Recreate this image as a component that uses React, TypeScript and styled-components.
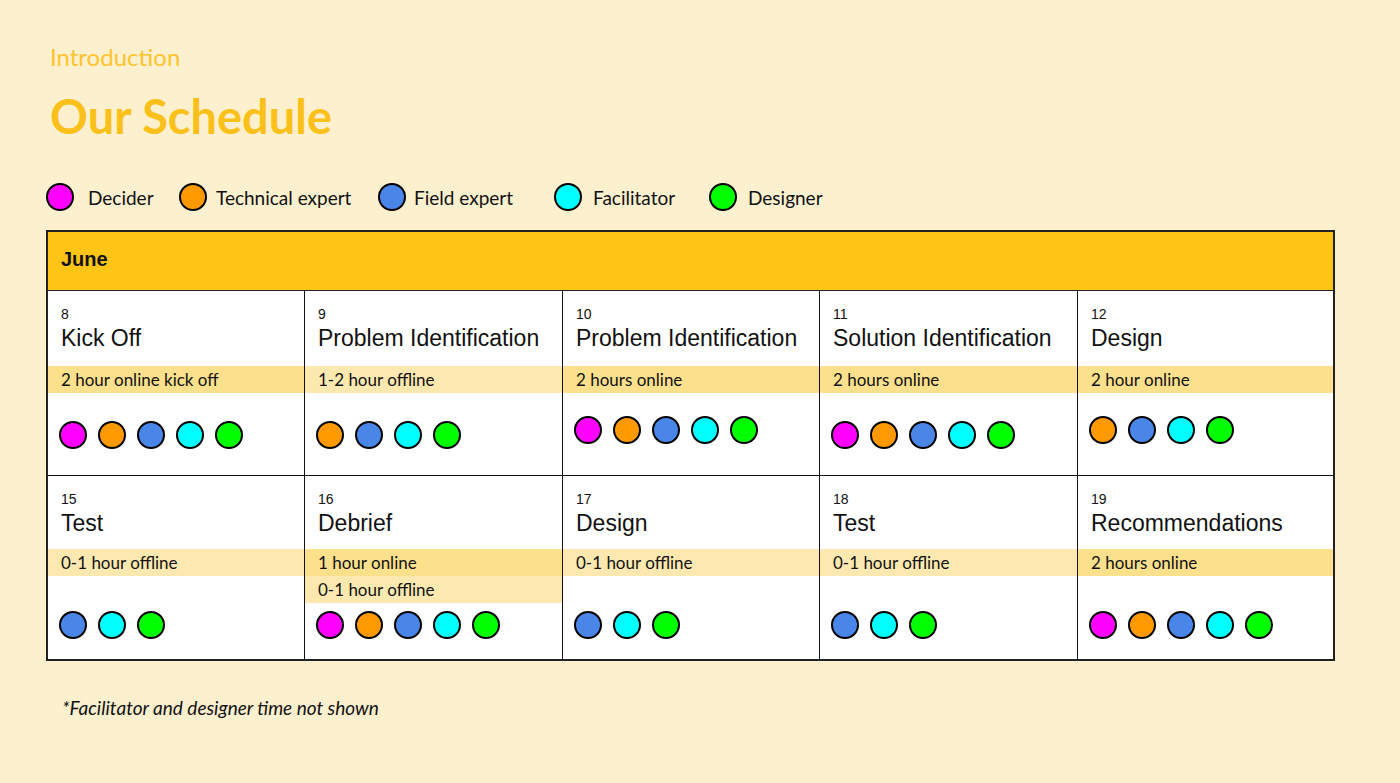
import styled, { createGlobalStyle } from "styled-components";

type Role = "decider" | "technical" | "field" | "facilitator" | "designer";

type Band = {
  text: string;
  online: boolean;
};

type Day = {
  date: number;
  title: string;
  bands: Band[];
  roles: Role[];
  lift?: number;
};

const roleColors: Record<Role, string> = {
  decider: "#ff00ff",
  technical: "#ff9900",
  field: "#4a86e8",
  facilitator: "#00ffff",
  designer: "#00ff00",
};

// widths and label gaps read off the legend strip
const legend: { role: Role; label: string; width: number; gap: number }[] = [
  { role: "decider", label: "Decider", width: 133, gap: 14 },
  { role: "technical", label: "Technical expert", width: 199, gap: 9 },
  { role: "field", label: "Field expert", width: 176, gap: 8 },
  { role: "facilitator", label: "Facilitator", width: 155, gap: 11 },
  { role: "designer", label: "Designer", width: 130, gap: 11 },
];

const all: Role[] = ["decider", "technical", "field", "facilitator", "designer"];

const weekOne: Day[] = [
  { date: 8, title: "Kick Off", bands: [{ text: "2 hour online kick off", online: true }], roles: all },
  {
    date: 9,
    title: "Problem Identification",
    bands: [{ text: "1-2 hour offline", online: false }],
    roles: ["technical", "field", "facilitator", "designer"],
  },
  { date: 10, title: "Problem Identification", bands: [{ text: "2 hours online", online: true }], roles: all, lift: 5 },
  { date: 11, title: "Solution Identification", bands: [{ text: "2 hours online", online: true }], roles: all },
  {
    date: 12,
    title: "Design",
    bands: [{ text: "2 hour online", online: true }],
    roles: ["technical", "field", "facilitator", "designer"],
    lift: 5,
  },
];

const weekTwo: Day[] = [
  {
    date: 15,
    title: "Test",
    bands: [{ text: "0-1 hour offline", online: false }],
    roles: ["field", "facilitator", "designer"],
  },
  {
    date: 16,
    title: "Debrief",
    bands: [
      { text: "1 hour online", online: true },
      { text: "0-1 hour offline", online: false },
    ],
    roles: all,
  },
  {
    date: 17,
    title: "Design",
    bands: [{ text: "0-1 hour offline", online: false }],
    roles: ["field", "facilitator", "designer"],
  },
  {
    date: 18,
    title: "Test",
    bands: [{ text: "0-1 hour offline", online: false }],
    roles: ["field", "facilitator", "designer"],
  },
  { date: 19, title: "Recommendations", bands: [{ text: "2 hours online", online: true }], roles: all },
];

const GlobalStyle = createGlobalStyle`
  html, body {
    margin: 0;
    padding: 0;
    background: #fdf0cf;
  }
`;

const Page = styled.div`
  width: 1400px;
  height: 783px;
  box-sizing: border-box;
  padding: 43px 0 0 46px;
  background: #fdf0cf;
  font-family: Lato, "Noto Sans", sans-serif;
  color: #111;
`;

const Kicker = styled.div`
  margin-left: 4px;
  font-size: 24px;
  line-height: 28px;
  color: #fcc42e;
`;

const Heading = styled.h1`
  margin: 18px 0 0 4px;
  font-size: 47px;
  line-height: 54px;
  font-weight: 700;
  color: #fbc11a;
`;

const Legend = styled.div`
  display: flex;
  align-items: center;
  margin-top: 40px;
  height: 28px;
`;

const LegendItem = styled.div<{ $w: number; $gap: number }>`
  display: flex;
  flex: none;
  align-items: center;
  gap: ${(p) => p.$gap}px;
  width: ${(p) => p.$w}px;
  font-size: 19px;
  color: #111;
`;

const Dot = styled.span<{ $color: string }>`
  display: inline-block;
  flex: none;
  width: 28px;
  height: 28px;
  box-sizing: border-box;
  border-radius: 50%;
  border: 2.5px solid #000;
  background: ${(p) => p.$color};
`;

const Table = styled.div`
  width: 1289px;
  box-sizing: border-box;
  margin-top: 19px;
  border: 2px solid #222;
  background: #fff;
`;

const Month = styled.div`
  height: 59px;
  box-sizing: border-box;
  padding: 15px 0 0 13px;
  background: #fec516;
  border-bottom: 1px solid #222;
  font-family: "Liberation Sans", Arial, sans-serif;
  font-weight: 700;
  font-size: 20px;
  line-height: 24px;
  color: #111;
`;

const Week = styled.div<{ $last?: boolean }>`
  display: grid;
  grid-template-columns: 257px 258px 257px 258px 1fr;
  border-bottom: ${(p) => (p.$last ? "none" : "1px solid #111")};
`;

const Cell = styled.div<{ $height: number }>`
  height: ${(p) => p.$height}px;
  border-right: 1px solid #111;
  display: flex;
  flex-direction: column;
  &:last-child {
    border-right: none;
  }
`;

const CellHead = styled.div<{ $height: number }>`
  height: ${(p) => p.$height}px;
  box-sizing: border-box;
  padding: 15px 0 0 13px;
  font-family: "Liberation Sans", Arial, sans-serif;
  color: #111;
`;

const DateNum = styled.div`
  font-size: 14px;
  line-height: 16px;
`;

const Title = styled.div`
  margin-top: 2px;
  font-size: 23px;
  line-height: 28px;
  white-space: nowrap;
`;

const Bands = styled.div<{ $min: number }>`
  min-height: ${(p) => p.$min}px;
`;

const BandRow = styled.div<{ $online: boolean }>`
  height: 27px;
  line-height: 27px;
  padding-left: 13px;
  font-size: 17px;
  color: #111;
  background: ${(p) => (p.$online ? "#fde08c" : "#fde9b0")};
`;

const Dots = styled.div<{ $top: number }>`
  display: flex;
  gap: 11px;
  padding-left: 11px;
  margin-top: ${(p) => p.$top}px;
`;

const Note = styled.div`
  margin: 36px 0 0 16px;
  font-size: 19px;
  line-height: 22px;
  font-style: italic;
  color: #111;
`;

type CellProps = {
  day: Day;
  height: number;
  headHeight: number;
  bandMin: number;
  dotsTop: number;
};

const DayCell = ({ day, height, headHeight, bandMin, dotsTop }: CellProps) => (
  <Cell $height={height}>
    <CellHead $height={headHeight}>
      <DateNum>{day.date}</DateNum>
      <Title>{day.title}</Title>
    </CellHead>
    <Bands $min={bandMin}>
      {day.bands.map((b, i) => (
        <BandRow key={i} $online={b.online}>
          {b.text}
        </BandRow>
      ))}
    </Bands>
    <Dots $top={dotsTop - (day.lift ?? 0)}>
      {day.roles.map((r) => (
        <Dot key={r} $color={roleColors[r]} />
      ))}
    </Dots>
  </Cell>
);

export default function App() {
  return (
    <Page>
      <GlobalStyle />
      <Kicker>Introduction</Kicker>
      <Heading>Our Schedule</Heading>
      <Legend>
        {legend.map((l) => (
          <LegendItem key={l.role} $w={l.width} $gap={l.gap}>
            <Dot $color={roleColors[l.role]} />
            {l.label}
          </LegendItem>
        ))}
      </Legend>
      <Table>
        <Month>June</Month>
        <Week>
          {weekOne.map((d) => (
            <DayCell key={d.date} day={d} height={184} headHeight={75} bandMin={27} dotsTop={28} />
          ))}
        </Week>
        <Week $last>
          {weekTwo.map((d) => (
            <DayCell key={d.date} day={d} height={183} headHeight={73} bandMin={55} dotsTop={7} />
          ))}
        </Week>
      </Table>
      <Note>*Facilitator and designer time not shown</Note>
    </Page>
  );
}
